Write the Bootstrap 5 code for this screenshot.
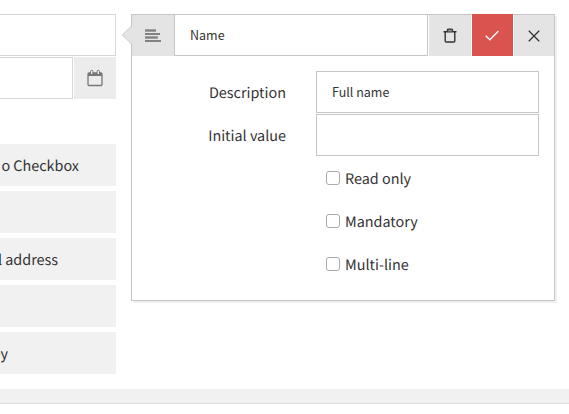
<!DOCTYPE html>
<html lang="en">
<head>
<meta charset="utf-8">
<title>Form editor</title>
<link href="https://cdn.jsdelivr.net/npm/bootstrap@5.3.0/dist/css/bootstrap.min.css" rel="stylesheet">
<style>
  body { width: 569px; height: 414px; overflow: hidden; background: #fff; color: #333;
    font-family: "Noto Sans CJK SC", "Open Sans", sans-serif; font-size: 14.4px; line-height: 24px; text-rendering: geometricPrecision; }
  .workspace { height: 389px; padding: 14px 14px 0 0; gap: 15px; }
  .form-side { width: 116px; }
  .field-box { height: 42px; border: 1px solid #d6d6d6; border-left: 0; }
  .cal-row { height: 42px; margin-top: 1px; gap: 1px; }
  .cal-btn { width: 42px; background: #ececec; }
  .palette { margin-top: 45px; gap: 5px; }
  .palette-item { height: 42px; padding-top: 2px; background: #f1f1f1; white-space: nowrap; }
  .end-a { padding-right: 37px; } .end-b { padding-right: 58px; } .end-c { padding-right: 108px; }
  .editor { width: 424px; height: 287px; border: 1px solid #c6c6c6; box-shadow: 2px 2px 0 #f0f0f0; }
  .pointer { left: -11px; top: 9px; z-index: 2; }
  .head { height: 42px; margin-top: -1px; gap: 1px; margin-right: -1px; }
  .type-icon { width: 42px; background: #e4e4e4; border-top: 1px solid #c6c6c6; }
  .text-in { border: 1px solid #c6c6c6; border-radius: 0; font-size: 12.5px; color: #333; padding: 0 15px 1px; height: 42px; outline: 0; background: #fff; min-width: 0; }
  .name-in { width: 254px; }
  .tool { height: 42px; border: 0; border-radius: 0; padding: 0; background: #e4e4e4; }
  .w-trash { width: 42px; border-top: 1px solid #c6c6c6; }
  .w-ok { width: 41px; padding-right: 1px; background: #d9534f; }
  .w-close { width: 41px; border-top: 1px solid #c6c6c6; border-right: 1px solid #c6c6c6; }
  .editor-body { padding-top: 15px; }
  .prop { height: 43px; }
  .prop-label { width: 154px; height: 44px; }
  .prop-in { width: 223px; margin-left: 30px; }
  .check-row { height: 43px; padding-left: 194px; padding-bottom: 2px; gap: 5px; }
  .check-row span { padding-top: 2px; }
  .check-row .form-check-input { width: 14px; height: 14px; margin: 0; border: 1px solid #aaa; border-radius: 3px; }
  .footer-bar { height: 15px; background: #f1f1f1; border-bottom: 1px solid #dedede; }
</style>
<script src="https://cdn.jsdelivr.net/npm/bootstrap@5.3.0/dist/js/bootstrap.bundle.min.js"></script>
</head>
<body>
<main class="workspace d-flex align-items-start">
  <section class="form-side flex-shrink-0">
    <div class="field-box"></div>
    <div class="cal-row d-flex">
      <div class="field-box flex-fill"></div>
      <div class="cal-btn d-flex align-items-center justify-content-center">
        <svg width="16" height="18" viewBox="0 0 16 18" fill="none"><path d="M1 4h14v3H1z" fill="#777"/><rect x="1" y="4" width="14" height="12.5" rx="1" stroke="#777" stroke-width="1.3"/><path d="M3.5 5V2.5a1.2 1.2 0 0 1 2.4 0V5M10.1 5V2.5a1.2 1.2 0 0 1 2.4 0V5" fill="#ececec" stroke="#777"/></svg>
      </div>
    </div>
    <div class="palette d-flex flex-column">
      <div class="palette-item end-a d-flex align-items-center justify-content-end overflow-hidden">o Checkbox</div>
      <div class="palette-item"></div>
      <div class="palette-item end-b d-flex align-items-center justify-content-end overflow-hidden">l address</div>
      <div class="palette-item"></div>
      <div class="palette-item end-c d-flex align-items-center justify-content-end overflow-hidden">ey</div>
    </div>
  </section>
  <section class="editor position-relative bg-white flex-shrink-0">
    <svg class="pointer position-absolute" width="12" height="22" viewBox="0 0 12 22"><path d="M12 1 1.5 11 12 21z" fill="#e4e4e4"/><path d="M11 1.5 1.3 11 11 20.5" fill="none" stroke="#c6c6c6"/></svg>
    <div class="head d-flex">
      <div class="d-flex">
        <div class="type-icon d-flex align-items-center justify-content-center">
          <svg width="16" height="13" viewBox="0 0 16 13"><path d="M0 0h11v3H0zM0 7h13v3H0z" fill="#a0a0a0"/><path d="M0 1h11v1H0zM0 4h15v2H0zM0 8h12v1H0zM0 11h16v2H0z" fill="#828282"/></svg>
        </div>
        <input class="text-in name-in" value="Name" aria-label="Field name">
      </div>
      <button class="tool w-trash d-flex align-items-center justify-content-center" aria-label="Delete"><svg width="14" height="15" viewBox="0 0 14 15" fill="none" stroke="#333" stroke-width="1.4"><path d="M.5 3.7h13M2.2 4v9q0 1 1 1h7.6q1 0 1-1V4"/><path d="M4.5 3.5V2q0-.9.9-.9h3.2q.9 0 .9.9v1.5" fill="#999"/></svg></button>
      <button class="tool w-ok d-flex align-items-center justify-content-center" aria-label="Apply"><svg width="14" height="11" viewBox="0 0 14 11" fill="none" stroke="#fff" stroke-width="1.3"><path d="m.7 5.7 4.2 4.1L13.4 1"/></svg></button>
      <button class="tool w-close d-flex align-items-center justify-content-center" aria-label="Close"><svg width="12" height="12" viewBox="0 0 12 12" stroke="#333" stroke-width="1.3"><path d="m.8.8 10.4 10.4M11.2.8.8 11.2"/></svg></button>
    </div>
    <div class="editor-body">
      <div class="prop d-flex"><label class="prop-label d-flex align-items-center justify-content-end" for="d">Description</label><input id="d" class="text-in prop-in" value="Full name"></div>
      <div class="prop d-flex"><label class="prop-label d-flex align-items-center justify-content-end" for="v">Initial value</label><input id="v" class="text-in prop-in"></div>
      <label class="check-row d-flex align-items-center"><input class="form-check-input" type="checkbox"><span>Read only</span></label>
      <label class="check-row d-flex align-items-center"><input class="form-check-input" type="checkbox"><span>Mandatory</span></label>
      <label class="check-row d-flex align-items-center"><input class="form-check-input" type="checkbox"><span>Multi-line</span></label>
    </div>
  </section>
</main>
<footer class="footer-bar"></footer>
</body>
</html>
